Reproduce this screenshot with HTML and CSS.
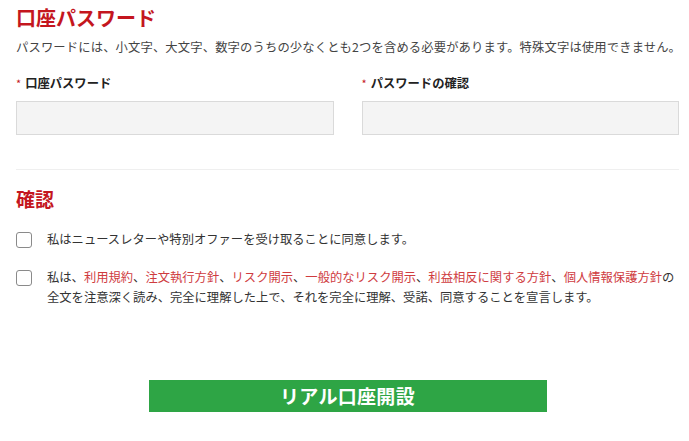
FILE: index.html
```html
<!DOCTYPE html>
<html lang="ja">
<head>
<meta charset="utf-8">
<link rel="stylesheet" href="styles.css">
</head>
<body>
<div class="page">
  <h1 class="title">口座パスワード</h1>
  <p class="desc">パスワードには、小文字、大文字、数字のうちの少なくとも2つを含める必要があります。特殊文字は使用できません。</p>
  <div class="fields">
    <div class="field">
      <label class="label"><span class="req">*</span>口座パスワード</label>
      <input class="input" type="password">
    </div>
    <div class="field">
      <label class="label"><span class="req">*</span>パスワードの確認</label>
      <input class="input" type="password">
    </div>
  </div>
  <hr class="divider">
  <h2 class="subtitle">確認</h2>
  <div class="check-row first">
    <span class="box"></span>
    <p class="check-text">私はニュースレターや特別オファーを受け取ることに同意します。</p>
  </div>
  <div class="check-row second">
    <span class="box"></span>
    <p class="check-text">私は、<a class="lnk">利用規約</a>、<a class="lnk">注文執行方針</a>、<a class="lnk">リスク開示</a>、<a class="lnk">一般的なリスク開示</a>、<a class="lnk">利益相反に関する方針</a>、<a class="lnk">個人情報保護方針</a>の全文を注意深く読み、完全に理解した上で、それを完全に理解、受諾、同意することを宣言します。</p>
  </div>
  <div class="btn-wrap">
    <button class="btn">リアル口座開設</button>
  </div>
</div>
</body>
</html>
```
FILE: styles.css
```css
* { box-sizing: border-box; }
html, body { margin: 0; padding: 0; background: #fff; }
body {
  font-family: "Noto Sans CJK JP", "Noto Sans", "Liberation Sans", sans-serif;
  color: #333;
  font-size: 12.3px;
}
.page {
  padding: 6px 10px 0 16px;
  width: 689px;
}
.title {
  margin: 0;
  font-size: 20px;
  line-height: 24px;
  font-weight: 700;
  color: #c4161e;
}
.desc {
  margin: 8px 0 0;
  line-height: 18px;
  color: #444;
  white-space: nowrap;
  letter-spacing: 0.15px;
}
.fields {
  display: grid;
  grid-template-columns: 1fr 1fr;
  column-gap: 28px;
  margin-top: 18px;
}
.field { display: flex; flex-direction: column; }
.label {
  font-weight: 700;
  line-height: 18px;
  color: #222;
  display: flex;
  align-items: center;
}
.req {
  color: #c4161e;
  font-weight: 400;
  font-size: 11px;
  margin-right: 4px;
}
.input {
  margin-top: 9px;
  height: 34px;
  border: 1px solid #dadada;
  background: #f4f4f4;
  border-radius: 0;
  padding: 0;
  outline: none;
}
.divider {
  margin: 34px 0 0;
  border: 0;
  border-top: 1px solid #efefef;
  height: 0;
}
.subtitle {
  margin: 17px 0 0;
  font-size: 19px;
  line-height: 24px;
  font-weight: 700;
  color: #c4161e;
}
.check-row {
  display: flex;
  align-items: flex-start;
  gap: 15px;
}
.check-row.first { margin-top: 18px; }
.check-row.second { margin-top: 18px; }
.box {
  flex: none;
  width: 16px;
  height: 16px;
  border: 1px solid #8a8a8a;
  border-radius: 3px;
  margin-top: 3px;
  background: #fff;
}
.check-text {
  margin: 0;
  line-height: 20px;
  color: #333;
}
.lnk { color: #cf3c3f; text-decoration: none; }
.btn-wrap {
  display: flex;
  justify-content: center;
  margin-top: 73px;
}
.btn {
  width: 398px;
  height: 32px;
  border: 0;
  background: #2ea545;
  color: #fff;
  font-family: inherit;
  font-size: 19px;
  font-weight: 700;
  line-height: 32px;
  padding: 0;
  letter-spacing: 0.3px;
}
```
